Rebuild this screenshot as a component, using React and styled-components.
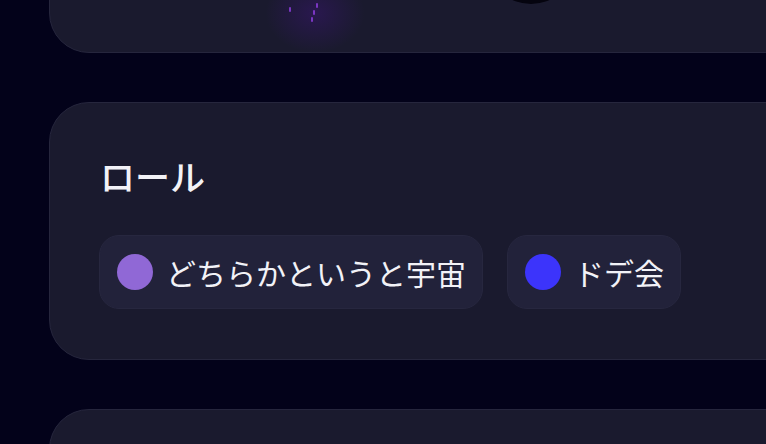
import React from "react";
import styled, { createGlobalStyle } from "styled-components";

const GlobalStyle = createGlobalStyle`
  html, body {
    margin: 0;
    padding: 0;
    background: #03021a;
    overflow: hidden;
  }
  body {
    font-family: "Noto Sans CJK JP", "Noto Sans", sans-serif;
    color: #f2f2f7;
  }
`;

const Page = styled.div`
  width: 766px;
  height: 444px;
  overflow: hidden;
  display: flex;
  flex-direction: column;
  gap: 49px;
  padding-left: 49px;
  box-sizing: border-box;
`;

const Card = styled.section`
  position: relative;
  flex-shrink: 0;
  width: 780px;
  box-sizing: border-box;
  background: #1a1a2e;
  border: 1px solid #26263d;
  border-radius: 40px;
  overflow: hidden;
`;

const TopCard = styled(Card)`
  height: 201px;
  margin-top: -148px;
`;

const Glow = styled.div`
  position: absolute;
  left: 215px;
  top: 120px;
  width: 100px;
  height: 80px;
  border-radius: 50%;
  background: radial-gradient(ellipse at center, rgba(70, 20, 140, 0.35), rgba(40, 10, 90, 0) 70%);
`;

const Spark = styled.span`
  position: absolute;
  width: 2px;
  height: 5px;
  border-radius: 2px;
  background: #8a3cd8;
  opacity: 0.85;
`;

const Orb = styled.div`
  position: absolute;
  left: 441px;
  top: 80px;
  width: 80px;
  height: 71px;
  border-radius: 50%;
  background: #05040f;
`;

const RoleCard = styled(Card)`
  padding: 47px 50px 50px 49px;
`;

const Title = styled.h2`
  margin: 0 0 33px 1px;
  font-size: 35px;
  font-weight: 500;
  line-height: 52px;
  letter-spacing: 0;
`;

const ChipRow = styled.div`
  display: flex;
  gap: 24px;
`;

const Chip = styled.div`
  display: flex;
  align-items: center;
  gap: 13px;
  height: 74px;
  padding: 0 16px 0 17px;
  box-sizing: border-box;
  background: #22223a;
  border: 1px solid #27273f;
  border-radius: 20px;
  font-size: 30px;
  line-height: 1;
  white-space: nowrap;
`;

const Dot = styled.span`
  width: 36px;
  height: 36px;
  border-radius: 50%;
  background: ${(p) => p.color};
  flex-shrink: 0;
`;

const BottomCard = styled(Card)`
  height: 200px;
`;

const roles = [
  { name: "どちらかというと宇宙", color: "#9068d6" },
  { name: "ドデ会", color: "#3c34fb" },
];

const sparks = [
  { left: 239, top: 154 },
  { left: 261, top: 164 },
  { left: 266, top: 150 },
  { left: 263, top: 157 },
];

export default function App() {
  return (
    <>
      <GlobalStyle />
      <Page>
        <TopCard>
          <Glow />
          {sparks.map((s, i) => (
            <Spark key={i} style={{ left: s.left, top: s.top }} />
          ))}
          <Orb />
        </TopCard>
        <RoleCard>
          <Title>ロール</Title>
          <ChipRow>
            {roles.map((r) => (
              <Chip key={r.name}>
                <Dot color={r.color} />
                {r.name}
              </Chip>
            ))}
          </ChipRow>
        </RoleCard>
        <BottomCard />
      </Page>
    </>
  );
}
